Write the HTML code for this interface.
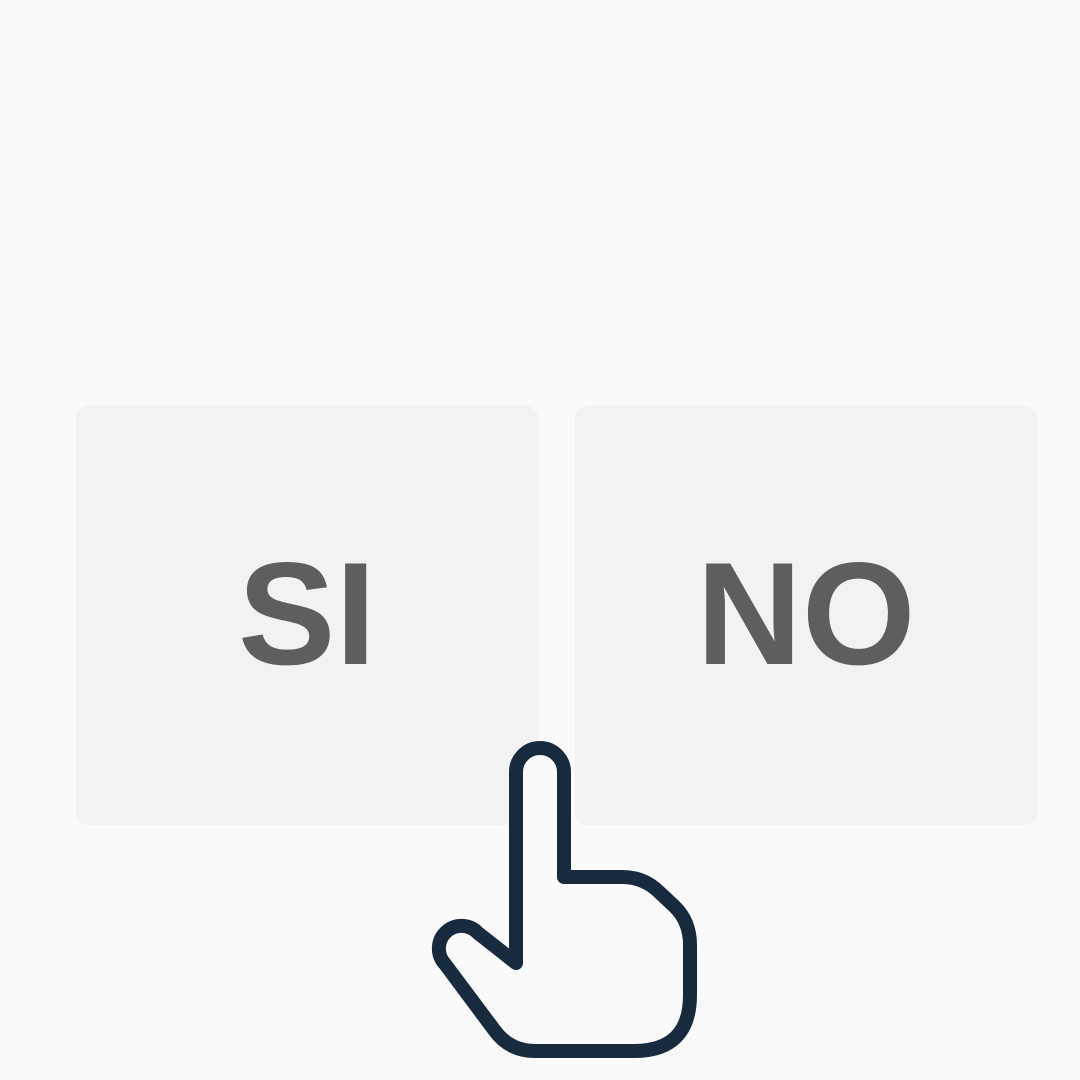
<!DOCTYPE html>
<html><head><style>
html,body{margin:0;padding:0;background:#fafafa;width:1080px;height:1080px;overflow:hidden;font-family:"Liberation Sans",sans-serif}
.b{position:absolute;top:406px;width:462px;height:419px;background:#f2f2f2;border-radius:12px;display:flex;align-items:center;justify-content:center;color:#5e5e5e;font-weight:bold;font-size:146px;line-height:1}
.b span{position:relative;top:-2px}
</style></head><body>
<div class="b" style="left:76px"><span>SI</span></div>
<div class="b" style="left:575px"><span>NO</span></div>
<svg width="1080" height="1080" style="position:absolute;left:0;top:0">
<path d="M516,963 L516,772 A24,24 0 0 1 564,772 L564,877 L622,877 Q643,877 658,891 L674,906 Q690,921 690,945 L690,995 Q690,1051 634,1051 L535,1051 Q510,1051 495,1031 L445,964 A22,22 0 0 1 478,933 Z" fill="#fafafa" stroke="#182b3e" stroke-width="14" stroke-linejoin="round"/>
</svg>
</body></html>
